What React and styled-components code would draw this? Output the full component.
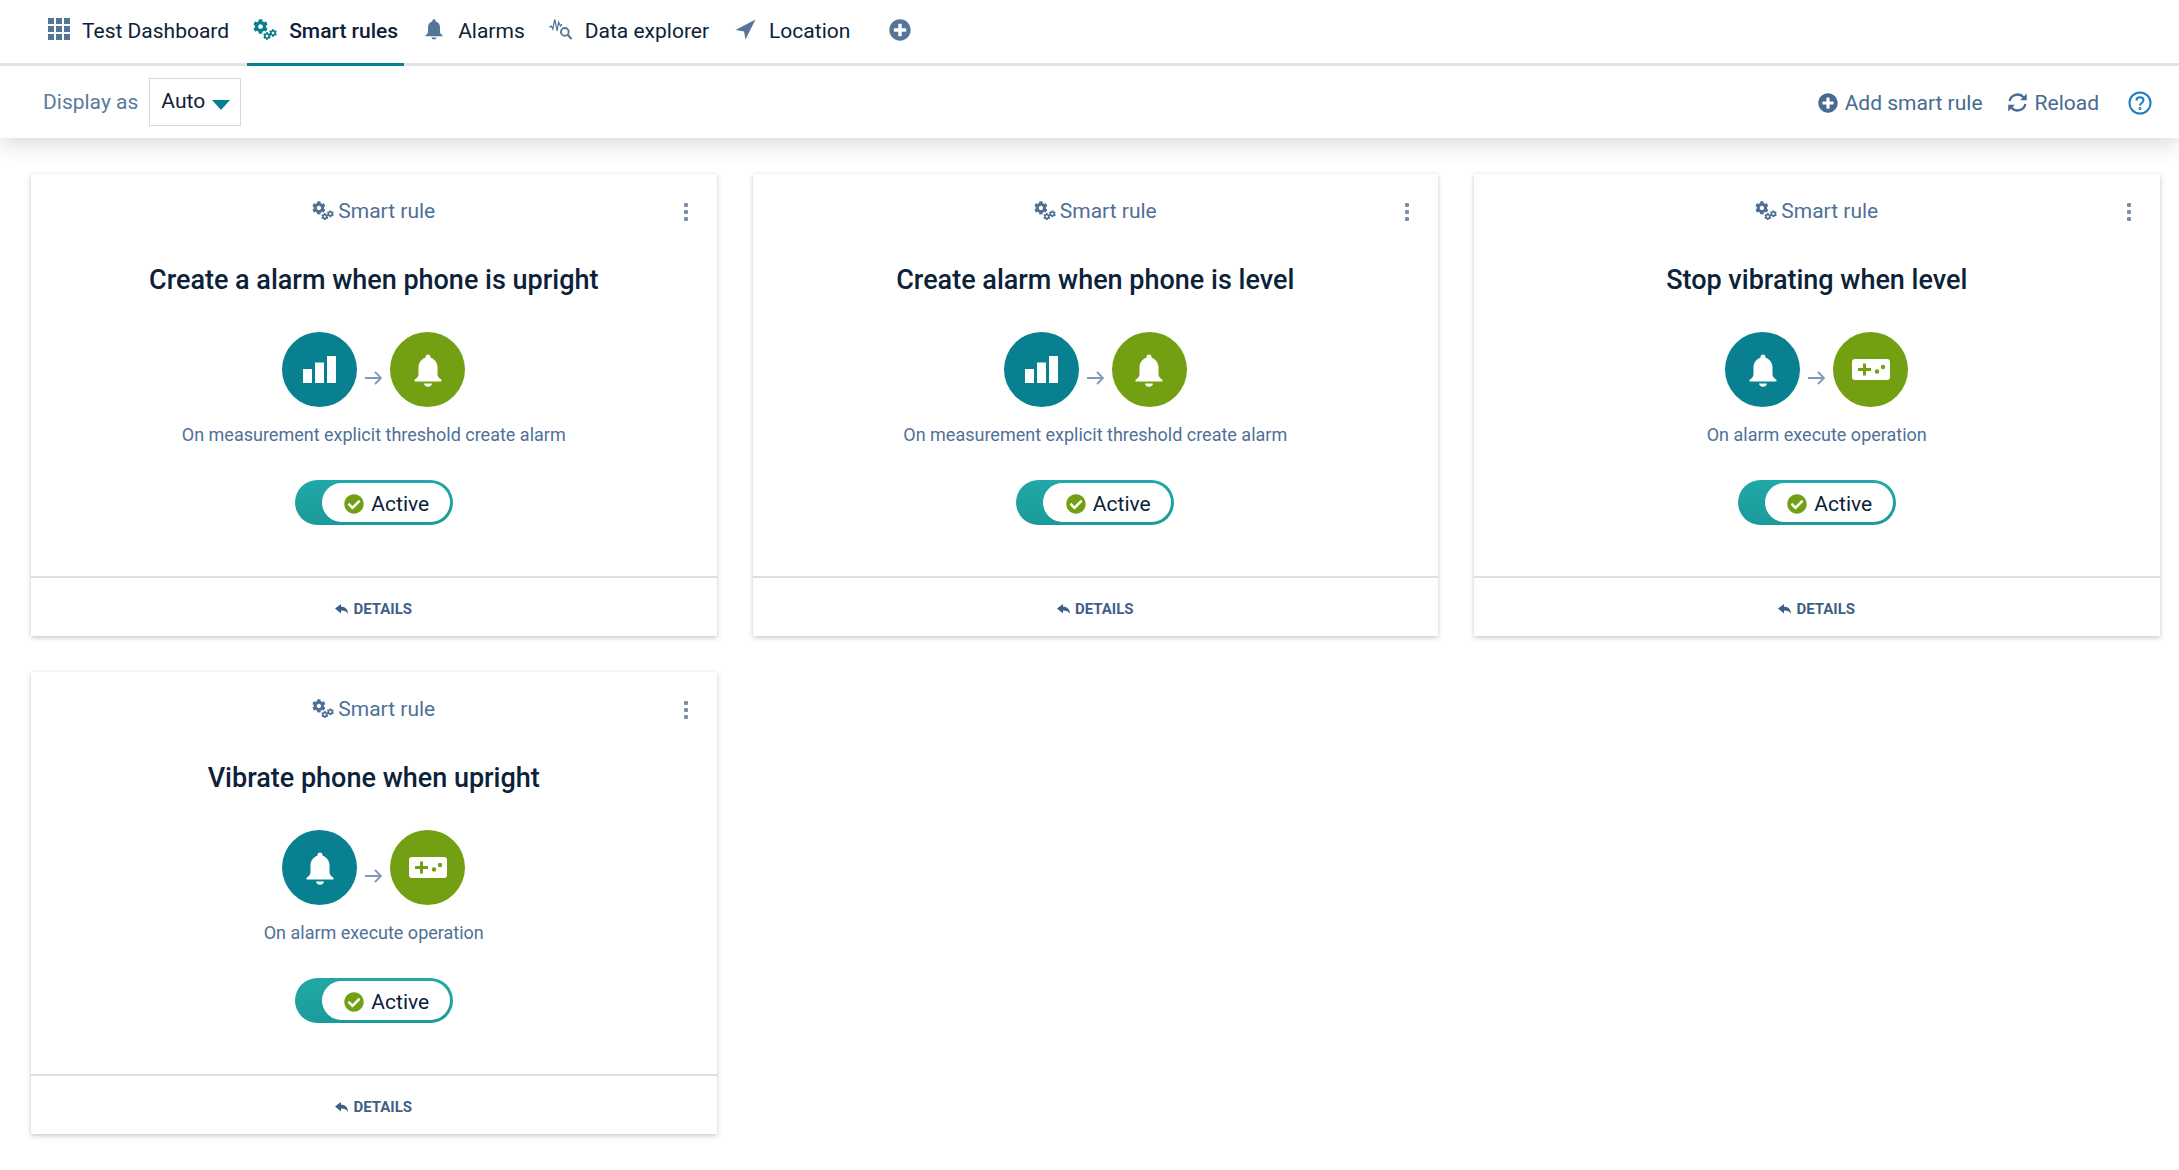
import React from 'react';
import styled, { createGlobalStyle } from 'styled-components';
import { FaCog, FaPlusCircle, FaCheckCircle } from 'react-icons/fa';

const INK = '#0b2239';
const SLATE = '#476a92';
const TEAL = '#08808f';
const GREEN = '#72a012';

const GlobalStyle = createGlobalStyle`
  html, body {
    margin: 0;
    background: #fff;
    color: ${INK};
    font-family: Roboto, "Liberation Sans", sans-serif;
  }
`;

const NavBar = styled.nav`
  display: flex;
  align-items: stretch;
  height: 63px;
  padding-left: 42px;
  gap: 12px;
  border-bottom: 3px solid #e1e3e7;
`;

const Tab = styled.div`
  display: flex;
  align-items: center;
  gap: 12px;
  height: 61px;
  padding: 0 6px 2px;
  font-size: 21px;
  font-weight: ${({ $active }) => ($active ? 500 : 400)};
  border-bottom: 3px solid ${({ $active }) => ($active ? TEAL : 'transparent')};
`;

const TabIcon = styled.span`
  display: flex;
  align-items: center;
  justify-content: center;
  width: ${({ $width }) => $width || 24}px;
  height: 26px;
  margin-top: -3px;
  color: ${({ $active }) => ($active ? TEAL : '#557599')};
`;

const AddTab = styled.span`
  display: flex;
  align-items: center;
  margin-left: 21px;
  padding-bottom: 3px;
  color: #557599;
  font-size: 22px;
`;

const ToolBar = styled.div`
  display: flex;
  align-items: center;
  justify-content: space-between;
  height: 72px;
  padding: 0 27px 0 43px;
  box-shadow: 0 4px 24px rgba(40, 60, 80, 0.22);
  clip-path: inset(0 0 -48px 0);
`;

const ToolGroup = styled.div`
  display: flex;
  align-items: center;
`;

const Label = styled.span`
  font-size: 21px;
  color: #5a7a9e;
  margin-right: 11px;
  padding-bottom: 1px;
`;

const SelectBox = styled.div`
  display: flex;
  align-items: center;
  box-sizing: border-box;
  width: 92px;
  height: 48px;
  padding: 0 0 2px 11px;
  gap: 7px;
  border: 1px solid #d2d8e2;
  font-size: 21px;
`;

const Caret = styled.span`
  width: 0;
  height: 0;
  margin-top: 7px;
  border-left: 9px solid transparent;
  border-right: 9px solid transparent;
  border-top: 10px solid ${TEAL};
`;

const ToolButton = styled.div`
  display: flex;
  align-items: center;
  gap: 7px;
  margin-left: ${({ $gap }) => $gap || 24}px;
  padding-top: 1px;
  color: ${SLATE};
  font-size: 21px;
  line-height: 26px;
`;

const Grid = styled.main`
  display: grid;
  grid-template-columns: repeat(3, 685.5px);
  column-gap: 36px;
  row-gap: 36px;
  padding: 36px 20px 24px 31px;
`;

const Card = styled.article`
  display: flex;
  flex-direction: column;
  height: 462px;
  background: #fff;
  box-shadow: 0 2px 5px rgba(40, 50, 70, 0.24), 0 0 2px rgba(40, 50, 70, 0.06);
`;

const CardHead = styled.header`
  position: relative;
  display: flex;
  align-items: center;
  justify-content: center;
  gap: 4px;
  height: 74px;
  font-size: 21px;
  color: #4f7096;
`;

const Kebab = styled.span`
  position: absolute;
  top: 29px;
  right: 29px;
  display: flex;
  flex-direction: column;
  gap: 3px;
  i {
    display: block;
    width: 4px;
    height: 4px;
    border-radius: 1px;
    background: #7d8fa8;
  }
`;

const Title = styled.h2`
  margin: 0;
  height: 63px;
  line-height: 65px;
  text-align: center;
  font-size: 27px;
  font-weight: 500;
`;

const Flow = styled.div`
  display: flex;
  justify-content: center;
  gap: 8px;
  margin-top: 21px;
`;

const Disc = styled.span`
  display: flex;
  align-items: center;
  justify-content: center;
  width: 75px;
  height: 75px;
  border-radius: 50%;
  background: ${({ $color }) => $color};
  color: #fff;
`;

const FlowArrow = styled.span`
  display: flex;
  align-items: center;
  padding-top: 16px;
`;

const Caption = styled.p`
  margin: 14px 0 0;
  line-height: 28px;
  text-align: center;
  font-size: 18px;
  color: #4f7096;
`;

const Switch = styled.div`
  display: flex;
  align-self: center;
  box-sizing: border-box;
  width: 158px;
  height: 45px;
  margin-top: 31px;
  padding: 3px 3px 3px 27px;
  border-radius: 23px;
  background: linear-gradient(#21a8a8, #1c9a9a);
`;

const SwitchFace = styled.div`
  display: flex;
  flex: 1;
  align-items: center;
  justify-content: center;
  gap: 7px;
  padding: 2px 0 0 2px;
  border-radius: 20px;
  background: #fff;
  font-size: 21px;
`;

const CardFoot = styled.footer`
  display: flex;
  align-items: center;
  justify-content: center;
  gap: 5px;
  margin-top: auto;
  box-sizing: border-box;
  height: 60px;
  padding-top: 4px;
  border-top: 2px solid #dedfe4;
  color: #3f5f88;
  font-size: 15px;
  font-weight: 700;
`;

const Bell = ({ size }) => (
  <svg width={size} height={size} viewBox="0 0 24 24" fill="currentColor">
    <path d="M12 2.2c-.9 0-1.6.7-1.6 1.6v.5C7.6 5.1 6 7.6 6 10.5v4.2c0 1.3-.9 2.6-2.500 3.500v1h17v-1c-1.600-.9-2.500-2.200-2.500-3.500v-4.200c0-2.900-1.600-5.400-4.400-6.200v-.5c0-.9-.7-1.600-1.600-1.600zM9.500 20.500h5c0 1.300-1.100 2-2.500 2s-2.500-.7-2.500-2z" />
  </svg>
);

const Cogs = ({ size }) => (
  <svg width={size} height={(size * 21) / 24} viewBox="0 0 24 21" fill="currentColor">
    <FaCog x={0} y={0} size={15} />
    <FaCog x={16} y={10} size={8} />
    <FaCog x={10} y={13} size={8} />
  </svg>
);

const Bars = () => (
  <svg width="33" height="27" viewBox="0 0 33 27" fill="#fff">
    <rect x="0" y="13" width="9" height="14" />
    <rect x="12" y="6.500" width="9" height="20.500" />
    <rect x="24" y="0" width="9" height="27" />
  </svg>
);

const Gamepad = () => (
  <svg width="38" height="21" viewBox="0 0 38 21">
    <rect width="38" height="21" rx="3" fill="#fff" />
    <path d="M6 10.500h13M12.500 4.500v12" stroke={GREEN} strokeWidth="3" fill="none" />
    <circle cx="25" cy="12.500" r="2.200" fill={GREEN} />
    <circle cx="31" cy="8" r="2.200" fill={GREEN} />
  </svg>
);

const Arrow = () => (
  <svg width="17" height="14" viewBox="0 0 17 14" fill="none" stroke="#8298b6" strokeWidth="1.800">
    <path d="M0 7h16M10 1l6 6-6 6" />
  </svg>
);

const ReplyIcon = () => (
  <svg width="13" height="10" viewBox="0 0 13 10" fill="currentColor">
    <path d="M0 4.500 L6 0 V2.800 C10.500 2.800 13 5.500 13 10 C11.500 7.500 9.500 6.600 6 6.600 V9.500 Z" />
  </svg>
);

const ReloadIcon = () => (
  <svg width="21" height="21" viewBox="0 0 20 20" fill="none" stroke="currentColor" strokeWidth="2.200">
    <path d="M2.500 8.500A7.700 7.700 0 0 1 15.800 5M17.500 11.500A7.700 7.700 0 0 1 4.200 15" />
    <path d="M18.800 1.500v6.300h-6.300zM1.200 18.500v-6.300h6.300z" fill="currentColor" stroke="none" />
  </svg>
);

const AppsIcon = () => (
  <svg width="22" height="22" viewBox="0 0 22 22" fill="#557599">
    {[0, 8, 16].flatMap(y =>
      [0, 8, 16].map(x => <rect key={`${x}-${y}`} x={x} y={y} width="6" height="6" />),
    )}
  </svg>
);

const ExplorerIcon = () => (
  <svg width="25" height="24" viewBox="0 0 25 24" fill="none" stroke="#557599">
    <path d="M0.500 10l2 -1 1.500 3 2 -10 2.500 12 1.500 -9 2 4 1.500 -2" strokeWidth="1.300" />
    <circle cx="16.500" cy="15" r="4" strokeWidth="2" />
    <path d="M19.500 18l4 4.500" strokeWidth="2.200" />
  </svg>
);

const LocationIcon = () => (
  <svg width="21" height="21" viewBox="0 0 21 21" fill="#557599">
    <path d="M20.500 0.500 L0.500 11 L9 12.500 L10.500 20.500 Z" />
  </svg>
);

const HelpIcon = () => (
  <svg width="24" height="24" viewBox="0 0 24 24" fill="none" stroke="#1f7bc0" strokeWidth="2">
    <circle cx="12" cy="12" r="10.500" />
    <path d="M8.500 9.500c0-2 1.600-3.200 3.500-3.200s3.500 1.200 3.500 3c0 2.700-3.500 2.600-3.500 5.200" />
    <circle cx="12" cy="17.500" r="0.500" fill="#1f7bc0" />
  </svg>
);

const tabs = [
  { label: 'Test Dashboard', icon: <AppsIcon />, width: 22 },
  { label: 'Smart rules', icon: <Cogs size={24} />, active: true },
  { label: 'Alarms', icon: <Bell size={26} /> },
  { label: 'Data explorer', icon: <ExplorerIcon /> },
  { label: 'Location', icon: <LocationIcon /> },
];

const rules = [
  {
    title: 'Create a alarm when phone is upright',
    caption: 'On measurement explicit threshold create alarm',
    from: <Bars />,
    to: <Bell size={38} />,
  },
  {
    title: 'Create alarm when phone is level',
    caption: 'On measurement explicit threshold create alarm',
    from: <Bars />,
    to: <Bell size={38} />,
  },
  {
    title: 'Stop vibrating when level',
    caption: 'On alarm execute operation',
    from: <Bell size={38} />,
    to: <Gamepad />,
  },
  {
    title: 'Vibrate phone when upright',
    caption: 'On alarm execute operation',
    from: <Bell size={38} />,
    to: <Gamepad />,
  },
];

const RuleCard = ({ rule }) => (
  <Card>
    <CardHead>
      <Cogs size={22} />
      Smart rule
      <Kebab>
        <i />
        <i />
        <i />
      </Kebab>
    </CardHead>
    <Title>{rule.title}</Title>
    <Flow>
      <Disc $color={TEAL}>{rule.from}</Disc>
      <FlowArrow>
        <Arrow />
      </FlowArrow>
      <Disc $color={GREEN}>{rule.to}</Disc>
    </Flow>
    <Caption>{rule.caption}</Caption>
    <Switch>
      <SwitchFace>
        <FaCheckCircle size={20} color={GREEN} />
        Active
      </SwitchFace>
    </Switch>
    <CardFoot>
      <ReplyIcon />
      DETAILS
    </CardFoot>
  </Card>
);

const App = () => (
  <>
    <GlobalStyle />
    <NavBar>
      {tabs.map(tab => (
        <Tab key={tab.label} $active={tab.active}>
          <TabIcon $active={tab.active} $width={tab.width}>
            {tab.icon}
          </TabIcon>
          {tab.label}
        </Tab>
      ))}
      <AddTab>
        <FaPlusCircle />
      </AddTab>
    </NavBar>
    <ToolBar>
      <ToolGroup>
        <Label>Display as</Label>
        <SelectBox>
          Auto
          <Caret />
        </SelectBox>
      </ToolGroup>
      <ToolGroup>
        <ToolButton>
          <FaPlusCircle size={20} />
          Add smart rule
        </ToolButton>
        <ToolButton>
          <ReloadIcon />
          Reload
        </ToolButton>
        <ToolButton $gap={29}>
          <HelpIcon />
        </ToolButton>
      </ToolGroup>
    </ToolBar>
    <Grid>
      {rules.map(rule => (
        <RuleCard key={rule.title} rule={rule} />
      ))}
    </Grid>
  </>
);

export default App;
